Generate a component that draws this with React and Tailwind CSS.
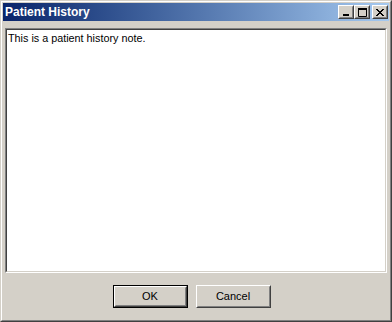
import React from "react";

function CapBtn({ children, className = "" }) {
  return (
    <div className={"w-[16px] h-[14px] border border-t-white border-l-white border-r-[#404040] border-b-[#404040] " + className}>
      <div className="w-full h-full border border-t-[#d4d0c8] border-l-[#d4d0c8] border-r-[#808080] border-b-[#808080] bg-[#d4d0c8] flex items-center justify-center">
        {children}
      </div>
    </div>
  );
}

function Btn({ label, def }) {
  const inner = (
    <div className="w-full h-full border border-t-white border-l-white border-r-[#404040] border-b-[#404040]">
      <div className="w-full h-full border border-t-[#d4d0c8] border-l-[#d4d0c8] border-r-[#808080] border-b-[#808080] bg-[#d4d0c8] flex items-center justify-center text-[11px] leading-none text-black" style={{ fontFamily: '"Liberation Sans", Arial, sans-serif' }}>
        {label}
      </div>
    </div>
  );
  if (def) {
    return <div className="w-[75px] h-[23px] border border-black">{inner}</div>;
  }
  return <div className="w-[75px] h-[23px]">{inner}</div>;
}

export default function App() {
  return (
    <div className="w-[392px] h-[322px] border border-t-[#d4d0c8] border-l-[#d4d0c8] border-r-[#404040] border-b-[#404040]">
      <div className="w-full h-full border border-t-white border-l-white border-r-[#808080] border-b-[#808080] bg-[#d4d0c8] p-px flex flex-col">
        <div className="h-[18px] bg-gradient-to-r from-[#0a246a] to-[#a6caf0] flex items-center pl-[2px] pr-[1px]">
          <span className="text-white font-bold text-[12px] leading-none" style={{ fontFamily: '"Liberation Sans", Arial, sans-serif' }}>
            Patient History
          </span>
          <div className="ml-auto flex items-center">
            <CapBtn>
              <svg width="8" height="7" viewBox="0 0 8 7"><rect x="1" y="5" width="6" height="2" fill="black" /></svg>
            </CapBtn>
            <CapBtn>
              <svg width="9" height="9" viewBox="0 0 9 9"><path d="M0.5 0.5h8v8h-8z" fill="none" stroke="black" /><rect x="0" y="0" width="9" height="2" fill="black" /></svg>
            </CapBtn>
            <CapBtn className="ml-[2px]">
              <svg width="8" height="7" viewBox="0 0 8 7" shapeRendering="crispEdges">
                <path d="M0 0h2v1h-2zM6 0h2v1h-2zM1 1h2v1h-2zM5 1h2v1h-2zM2 2h4v1h-4zM3 3h2v1h-2zM2 4h4v1h-4zM1 5h2v1h-2zM5 5h2v1h-2zM0 6h2v1h-2zM6 6h2v1h-2z" fill="black" />
              </svg>
            </CapBtn>
          </div>
        </div>
        <div className="flex-1 flex flex-col pt-[7px] px-[2px]">
          <div className="h-[245px] border border-t-[#808080] border-l-[#808080] border-r-white border-b-white">
            <div
              className="w-full h-full border border-t-[#404040] border-l-[#404040] border-r-[#d4d0c8] border-b-[#d4d0c8] bg-white px-[1px] pt-[2px] text-[10.8px] leading-[13px] text-black"
              style={{ fontFamily: '"Liberation Sans", Arial, sans-serif' }}
            >
              This is a patient history note.
            </div>
          </div>
          <div className="flex justify-center gap-[8px] mt-[12px] pr-[9px]">
            <Btn label="OK" def />
            <Btn label="Cancel" />
          </div>
        </div>
      </div>
    </div>
  );
}
